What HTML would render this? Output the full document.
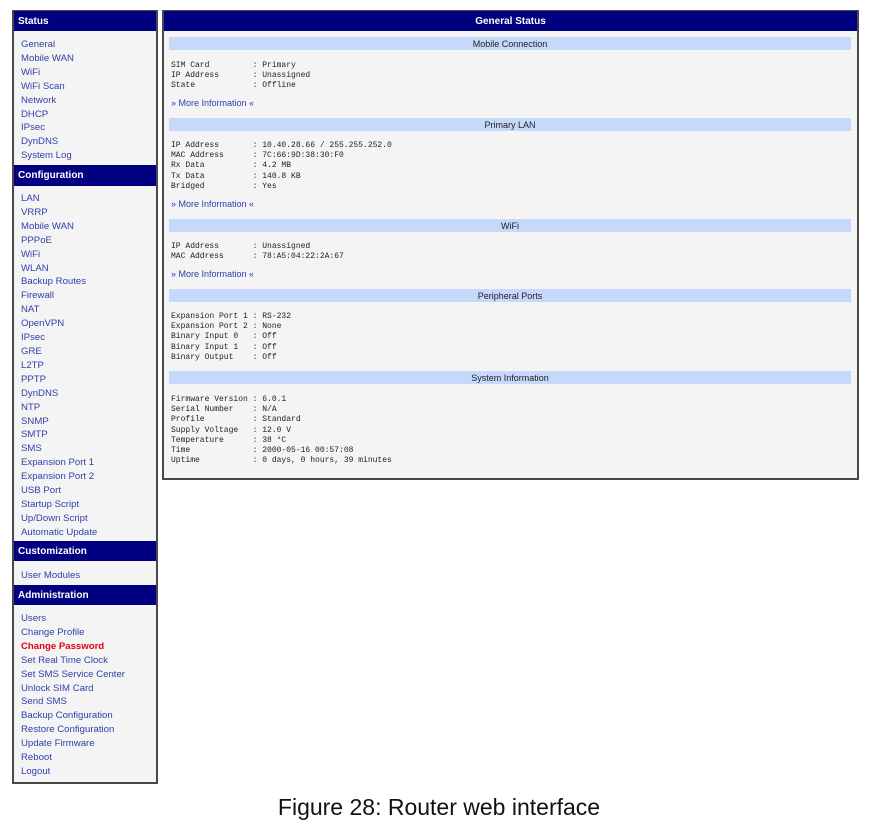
<!DOCTYPE html>
<html><head><meta charset="utf-8"><style>
*{margin:0;padding:0;box-sizing:border-box}
body{width:870px;height:826px;background:#fff;position:relative;font-family:"Liberation Sans",sans-serif;overflow:hidden}
.box{position:absolute;background:#f4f4f4;border:2px solid #484848}
.hd{position:absolute;background:#000080;color:#fff;font-weight:bold;font-size:10px;height:20px;line-height:22px}
.list{position:absolute;left:21px;font-size:9.6px;line-height:13.9px;color:#3040a8;white-space:nowrap}
.red{color:#e00010;font-weight:bold}
.bar{position:absolute;left:169px;width:682px;height:13px;background:#c6d9fb;font-size:9px;line-height:15px;text-align:center;color:#222}
pre{position:absolute;left:171px;font-family:"Liberation Mono",monospace;font-size:8px;line-height:10.2px;color:#222}
.mi{position:absolute;left:171px;font-size:9px;color:#3040a8}
</style></head><body>
<div class="box" style="left:12px;top:10px;width:146px;height:774px"></div>
<div class="hd" style="left:14px;top:11px;width:142px;padding-left:4px">Status</div>
<div class="list" style="top:38px">General<br>Mobile WAN<br>WiFi<br>WiFi Scan<br>Network<br>DHCP<br>IPsec<br>DynDNS<br>System Log</div>
<div class="hd" style="left:14px;top:165px;width:142px;padding-left:4px;height:21px">Configuration</div>
<div class="list" style="top:192px">LAN<br>VRRP<br>Mobile WAN<br>PPPoE<br>WiFi<br>WLAN<br>Backup Routes<br>Firewall<br>NAT<br>OpenVPN<br>IPsec<br>GRE<br>L2TP<br>PPTP<br>DynDNS<br>NTP<br>SNMP<br>SMTP<br>SMS<br>Expansion Port 1<br>Expansion Port 2<br>USB Port<br>Startup Script<br>Up/Down Script<br>Automatic Update</div>
<div class="hd" style="left:14px;top:541px;width:142px;padding-left:4px">Customization</div>
<div class="list" style="top:569px">User Modules</div>
<div class="hd" style="left:14px;top:585px;width:142px;padding-left:4px">Administration</div>
<div class="list" style="top:612px">Users<br>Change Profile<br><span class="red">Change Password</span><br>Set Real Time Clock<br>Set SMS Service Center<br>Unlock SIM Card<br>Send SMS<br>Backup Configuration<br>Restore Configuration<br>Update Firmware<br>Reboot<br>Logout</div>

<div class="box" style="left:162px;top:10px;width:697px;height:470px"></div>
<div class="hd" style="left:164px;top:11px;width:693px;text-align:center">General Status</div>
<div class="bar" style="top:37px">Mobile Connection</div>
<pre style="top:61px">SIM Card         : Primary
IP Address       : Unassigned
State            : Offline</pre>
<div class="mi" style="top:98px">» More Information «</div>
<div class="bar" style="top:118px">Primary LAN</div>
<pre style="top:141px">IP Address       : 10.40.28.66 / 255.255.252.0
MAC Address      : 7C:66:9D:38:30:F0
Rx Data          : 4.2 MB
Tx Data          : 140.8 KB
Bridged          : Yes</pre>
<div class="mi" style="top:199px">» More Information «</div>
<div class="bar" style="top:219px">WiFi</div>
<pre style="top:242px">IP Address       : Unassigned
MAC Address      : 78:A5:04:22:2A:67</pre>
<div class="mi" style="top:269px">» More Information «</div>
<div class="bar" style="top:289px">Peripheral Ports</div>
<pre style="top:312px">Expansion Port 1 : RS-232
Expansion Port 2 : None
Binary Input 0   : Off
Binary Input 1   : Off
Binary Output    : Off</pre>
<div class="bar" style="top:371px">System Information</div>
<pre style="top:395px">Firmware Version : 6.0.1
Serial Number    : N/A
Profile          : Standard
Supply Voltage   : 12.0 V
Temperature      : 38 °C
Time             : 2000-05-16 00:57:08
Uptime           : 0 days, 0 hours, 39 minutes</pre>

<div style="position:absolute;left:0;width:878px;top:794px;text-align:center;font-size:23px;color:#111">Figure 28: Router web interface</div>
</body></html>
